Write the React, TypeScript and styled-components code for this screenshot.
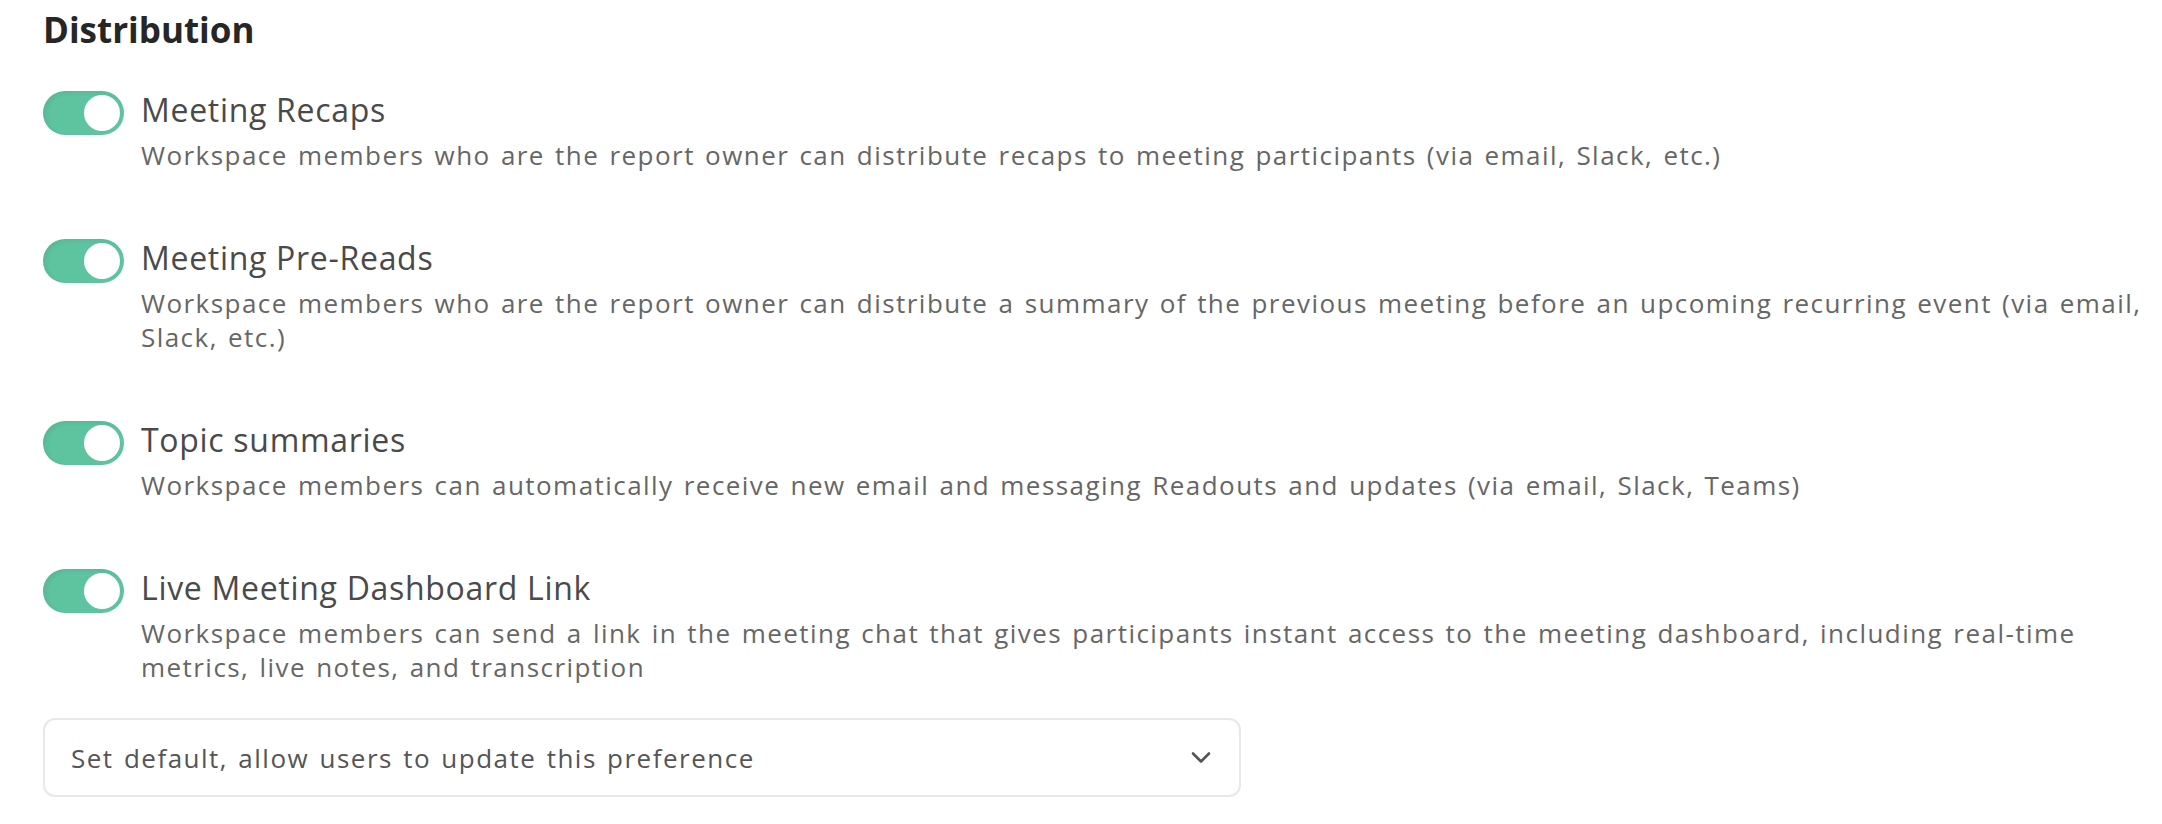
import styled, { createGlobalStyle } from 'styled-components';

const GlobalStyle = createGlobalStyle`
  body {
    margin: 0;
    background: #ffffff;
    font-family: 'Open Sans', 'Noto Sans', sans-serif;
  }
`;

type Setting = {
  id: string;
  title: string;
  description: string;
  enabled: boolean;
};

const settings: Setting[] = [
  {
    id: 'recaps',
    title: 'Meeting Recaps',
    description:
      'Workspace members who are the report owner can distribute recaps to meeting participants (via email, Slack, etc.)',
    enabled: true,
  },
  {
    id: 'prereads',
    title: 'Meeting Pre-Reads',
    description:
      'Workspace members who are the report owner can distribute a summary of the previous meeting before an upcoming recurring event (via email, Slack, etc.)',
    enabled: true,
  },
  {
    id: 'topics',
    title: 'Topic summaries',
    description:
      'Workspace members can automatically receive new email and messaging Readouts and updates (via email, Slack, Teams)',
    enabled: true,
  },
  {
    id: 'dashboard',
    title: 'Live Meeting Dashboard Link',
    description:
      'Workspace members can send a link in the meeting chat that gives participants instant access to the meeting dashboard, including real-time metrics, live notes, and transcription',
    enabled: true,
  },
];

const Toggle = ({ on }: { on: boolean }) => (
  <StyledTrack on={on} role="switch" aria-checked={on}>
    <StyledKnob on={on} />
  </StyledTrack>
);

export default function App() {
  return (
    <StyledPage>
      <GlobalStyle />
      <StyledHeading>Distribution</StyledHeading>
      <StyledList>
        {settings.map((s) => (
          <StyledRow key={s.id}>
            <Toggle on={s.enabled} />
            <StyledText>
              <StyledTitle>{s.title}</StyledTitle>
              <StyledDescription>{s.description}</StyledDescription>
            </StyledText>
          </StyledRow>
        ))}
      </StyledList>
      <StyledSelect>
        <span>Set default, allow users to update this preference</span>
        <svg width="20" height="13" viewBox="0 0 20 13" fill="none">
          <path
            d="M2 2.5 L10 10.5 L18 2.5"
            stroke="#555"
            strokeWidth="2.6"
            strokeLinecap="round"
            strokeLinejoin="round"
          />
        </svg>
      </StyledSelect>
    </StyledPage>
  );
}

const StyledPage = styled.div`
  padding: 8px 8px 40px 43px;
`;

const StyledHeading = styled.h2`
  margin: 0 0 36px;
  font-size: 35px;
  line-height: 44px;
  font-weight: 700;
  color: #262626;
`;

const StyledList = styled.div`
  display: flex;
  flex-direction: column;
  gap: 64px;
`;

const StyledRow = styled.div`
  display: flex;
  align-items: flex-start;
  gap: 17px;
`;

const StyledTrack = styled.div<{ on: boolean }>`
  position: relative;
  flex: 0 0 auto;
  width: 81px;
  height: 44px;
  margin-top: 3px;
  border-radius: 22px;
  background: ${({ on }) => (on ? '#5ec39f' : '#d5d5d5')};
  box-shadow: inset 3px 2px 4px rgba(0, 0, 0, 0.06);
`;

const StyledKnob = styled.span<{ on: boolean }>`
  position: absolute;
  top: 4px;
  left: ${({ on }) => (on ? '41px' : '4px')};
  width: 36px;
  height: 36px;
  border-radius: 50%;
  background: #ffffff;
`;

const StyledText = styled.div`
  flex: 1;
  min-width: 0;
`;

const StyledTitle = styled.div`
  font-size: 32px;
  line-height: 44px;
  font-weight: 500;
  color: #4a4a4a;
  letter-spacing: 0.7px;
  margin-bottom: 6px;
`;

const StyledDescription = styled.div`
  font-size: 26px;
  line-height: 34px;
  font-weight: 400;
  color: #666666;
  letter-spacing: 1.45px;
  word-spacing: 2px;
`;

const StyledSelect = styled.div`
  box-sizing: border-box;
  display: flex;
  align-items: center;
  justify-content: space-between;
  width: 1198px;
  height: 79px;
  margin-top: 34px;
  padding: 0 28px 0 26px;
  border: 2px solid #e8e8e8;
  border-radius: 12px;
  font-size: 26px;
  color: #555555;
  letter-spacing: 1.5px;
  word-spacing: 2px;
`;
